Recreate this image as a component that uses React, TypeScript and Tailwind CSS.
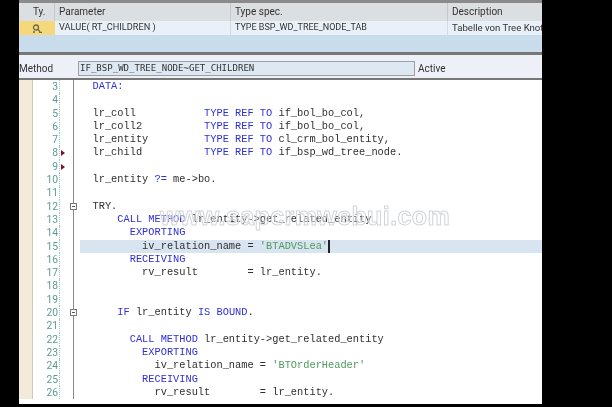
const K = "text-[#2f2fd8]";
const S = "text-[#4f9a5a]";
type Seg = [string, string?];
const lines: { n: number; i: number; segs: Seg[]; fold?: boolean; mark?: boolean; active?: boolean }[] = [
  { n: 3, i: 0, segs: [["DATA:", K]] },
  { n: 4, i: 0, segs: [] },
  { n: 5, i: 0, segs: [["lr_coll           "], ["TYPE REF TO", K], [" if_bol_bo_col,"]] },
  { n: 6, i: 0, segs: [["lr_coll2          "], ["TYPE REF TO", K], [" if_bol_bo_col,"]] },
  { n: 7, i: 0, segs: [["lr_entity         "], ["TYPE REF TO", K], [" cl_crm_bol_entity,"]] },
  { n: 8, i: 0, mark: true, segs: [["lr_child          "], ["TYPE REF TO", K], [" if_bsp_wd_tree_node."]] },
  { n: 9, i: 0, mark: true, segs: [] },
  { n: 10, i: 0, segs: [["lr_entity "], ["?=", K], [" me->bo."]] },
  { n: 11, i: 0, segs: [] },
  { n: 12, i: 0, fold: true, segs: [["TRY."]] },
  { n: 13, i: 4, segs: [["CALL METHOD", K], [" lr_entity->get_related_entity"]] },
  { n: 14, i: 6, segs: [["EXPORTING", K]] },
  { n: 15, i: 8, active: true, segs: [["iv_relation_name = "], ["'BTADVSLea'", S]] },
  { n: 16, i: 6, segs: [["RECEIVING", K]] },
  { n: 17, i: 8, segs: [["rv_result        = lr_entity."]] },
  { n: 18, i: 0, segs: [] },
  { n: 19, i: 0, segs: [] },
  { n: 20, i: 4, fold: true, segs: [["IF", K], [" lr_entity "], ["IS BOUND", K], ["."]] },
  { n: 21, i: 0, segs: [] },
  { n: 22, i: 6, segs: [["CALL METHOD", K], [" lr_entity->get_related_entity"]] },
  { n: 23, i: 8, segs: [["EXPORTING", K]] },
  { n: 24, i: 10, segs: [["iv_relation_name = "], ["'BTOrderHeader'", S]] },
  { n: 25, i: 8, segs: [["RECEIVING", K]] },
  { n: 26, i: 10, segs: [["rv_result        = lr_entity."]] },
];

function Row({ l }: { l: (typeof lines)[number] }) {
  return (
    <div className="flex h-[13.3px] shrink-0 leading-[13.3px]">
      <div className="w-[14px] shrink-0 border-r border-[#cfcabf] bg-[#f3ead9]" />
      <div className="w-[27px] shrink-0 border-r border-dotted border-[#8fcfc8] bg-white pr-px text-right text-[10.3px] text-[#5f9a92]">
        {l.n}
      </div>
      <div className="relative w-[14px] shrink-0 border-r border-[#8a8a8a] bg-white">
        {l.mark && (
          <svg width="4" height="6" viewBox="0 0 4 6" className="absolute left-px top-[4px]">
            <path d="M0 0L4 3L0 6Z" fill="#7a1230" />
          </svg>
        )}
        {l.fold && (
          <svg width="7" height="7" viewBox="0 0 7 7" className="absolute left-[10px] top-[3px]">
            <rect x="0.5" y="0.5" width="6" height="6" fill="#fff" stroke="#777" />
            <path d="M2 3.5H5" stroke="#555" />
          </svg>
        )}
      </div>
      <div className={`relative ml-[6px] flex-1 ${l.active ? "bg-[#d8e4f0]" : ""}`}>
        <pre className="ml-[12.5px] font-['Liberation_Mono',monospace] text-[10.33px] leading-[13.3px] text-[#303030]">
          {" ".repeat(l.i)}
          {l.segs.map(([t, c], i) => (
            <span key={i} className={c}>
              {t}
            </span>
          ))}
          {l.active && <span className="inline-block h-[13px] w-[1.5px] bg-[#222] align-top" />}
        </pre>
      </div>
    </div>
  );
}

export default function App() {
  return (
    <div className="flex h-[407px] w-[612px] overflow-hidden bg-black font-['Roboto',sans-serif]">
      <div className="relative mb-[3px] ml-[19px] flex w-[523px] flex-col overflow-hidden bg-white blur-[0.35px]">
        <div className="h-[3px] shrink-0 bg-[#8a8a8a]" />
        <div className="flex h-[18px] shrink-0 items-center bg-[#dcdfe2] text-[10px] text-[#333]">
          <div className="h-full w-[36px] shrink-0 border-r border-[#c4c8cc] pl-[14px] leading-[18px]">Ty.</div>
          <div className="h-full w-[176px] shrink-0 border-r border-[#c4c8cc] pl-[4px] leading-[18px]">Parameter</div>
          <div className="h-full w-[217px] shrink-0 border-r border-[#c4c8cc] pl-[4px] leading-[18px]">Type spec.</div>
          <div className="flex-1 pl-[4px] leading-[18px]">Description</div>
        </div>
        <div className="flex h-[14px] shrink-0 items-center bg-[#e9f0f7] text-[9.2px] text-[#333]">
          <div className="flex h-full w-[36px] shrink-0 items-center justify-center bg-[#f5d77c]">
            <svg width="12" height="9" viewBox="0 0 12 9">
              <circle cx="5" cy="3.5" r="2.5" fill="none" stroke="#6f6a4a" strokeWidth="1.3" />
              <path d="M7 5.5L9 7.5M2 8H4M8 8.5H11" stroke="#6f6a4a" strokeWidth="1.3" />
            </svg>
          </div>
          <div className="h-full w-[176px] shrink-0 border-r border-[#d4dbe2] pl-[4px] leading-[12px]">VALUE( RT_CHILDREN )</div>
          <div className="h-full w-[217px] shrink-0 border-r border-[#d4dbe2] pl-[4px] text-[9px] leading-[12px]">TYPE BSP_WD_TREE_NODE_TAB</div>
          <div className="flex-1 overflow-hidden whitespace-nowrap pl-[4px] text-[9.6px] leading-[12px]">Tabelle von Tree Knot</div>
        </div>
        <div className="h-[17px] shrink-0 bg-[#c8dcec]" />
        <div className="h-[3px] shrink-0 bg-[#777]" />
        <div className="flex h-[25px] shrink-0 items-center border-b-[2px] border-[#777] bg-[#edf1f7] pt-[4px] text-[10px] text-[#333]">
          <div className="w-[59px] shrink-0">Method</div>
          <div className="flex h-[15px] w-[337px] shrink-0 items-center border border-[#9aa0a6] bg-[#dde8f3] pl-[1px] font-['DejaVu_Sans_Mono',monospace] text-[9.05px]">
            IF_BSP_WD_TREE_NODE~GET_CHILDREN
          </div>
          <div className="ml-[3px]">Active</div>
        </div>
        <div className="flex min-h-0 flex-1 flex-col overflow-hidden">
          {lines.map((l) => (
            <Row key={l.n} l={l} />
          ))}
        </div>
        <div className="pointer-events-none absolute left-[141px] top-[198px] whitespace-nowrap font-['Liberation_Sans',sans-serif] text-[25px] font-bold tracking-[0.4px] text-white/30 [-webkit-text-stroke:1px_#d2d5d8]">
          www.sapcrmwebui.com
        </div>
      </div>
    </div>
  );
}
